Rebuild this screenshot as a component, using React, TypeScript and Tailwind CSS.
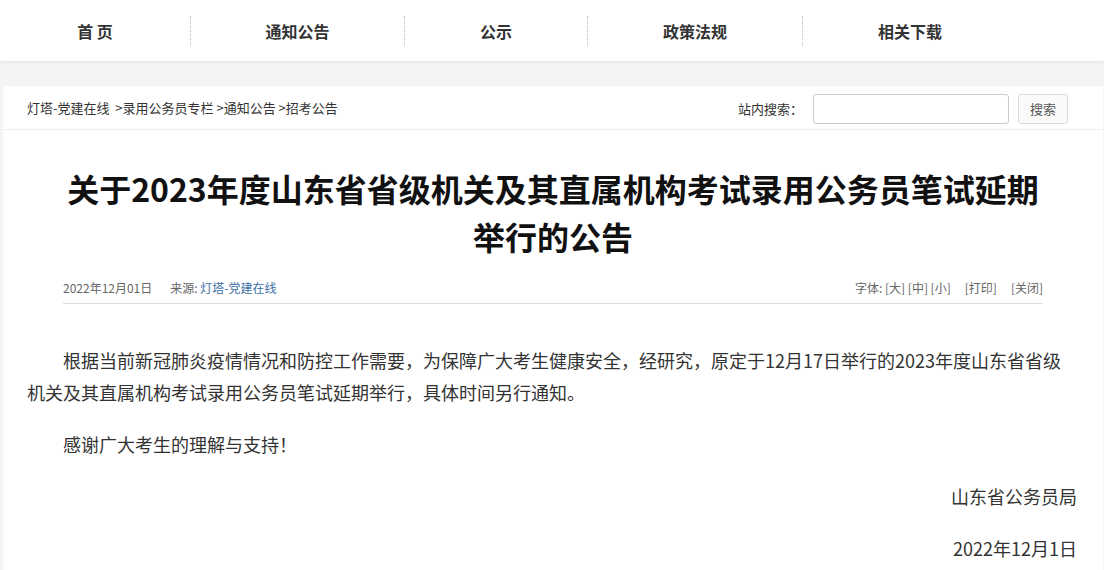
import React from 'react';

const navItems = [
    { label: '首 页', width: 'w-[190px]' },
    { label: '通知公告', width: 'w-[214px]' },
    { label: '公示', width: 'w-[183px]' },
    { label: '政策法规', width: 'w-[215px]' },
    { label: '相关下载', width: 'w-[215px]' },
];

const font = { fontFamily: '"Microsoft YaHei", "Noto Sans CJK SC", "Noto Sans", sans-serif' };

const App: React.FC = () => {
    return (
        <div className="min-h-[570px] bg-[#f4f4f4] text-[#333]" style={font}>
            {/* top nav */}
            <div className="h-[61px] bg-white shadow-[0_1px_3px_rgba(0,0,0,0.08)] flex items-center">
                {navItems.map((item, i) => (
                    <div
                        key={item.label}
                        className={`${item.width} h-[30px] flex items-center justify-center text-[16px] font-bold text-[#333] ${i > 0 ? 'border-l border-dotted border-[#bbb]' : ''}`}
                    >
                        {item.label}
                    </div>
                ))}
            </div>

            <div className="pt-[25px] pl-[3px]">
                <div className="w-[1100px] bg-white">
                    {/* breadcrumb + search */}
                    <div className="h-[44px] flex items-center justify-between pl-[24px] pr-[35px] border-b border-[#eee]">
                        <div className="text-[13px] text-[#333]">
                            灯塔-党建在线&nbsp;&nbsp;&gt;录用公务员专栏 &gt;通知公告 &gt;招考公告
                        </div>
                        <div className="flex items-center pt-[2px]">
                            <span className="text-[13px] text-[#333] mr-[10px]">站内搜索：</span>
                            <input className="w-[196px] h-[30px] border border-[#ccc] rounded-[3px] outline-none" />
                            <button className="ml-[9px] w-[50px] h-[30px] border border-[#ddd] rounded-[3px] bg-[#fafafa] text-[13px] text-[#555]">
                                搜索
                            </button>
                        </div>
                    </div>

                    {/* title */}
                    <div className="px-[60px] pt-[34px]">
                        <h1 className="text-center text-[32px] leading-[48px] font-bold text-[#111]">
                            关于2023年度山东省省级机关及其直属机构考试录用公务员笔试延期举行的公告
                        </h1>
                        <div className="mt-[12px] h-[32px] flex items-center justify-between border-b border-[#ddd] text-[12px] text-[#666]">
                            <div>
                                2022年12月01日<span className="ml-[18px]">来源: </span>
                                <span className="text-[#3b6ea5]">灯塔-党建在线</span>
                            </div>
                            <div>
                                字体: [大] [中] [小]<span className="ml-[14px]">[打印]</span>
                                <span className="ml-[14px]">[关闭]</span>
                            </div>
                        </div>
                    </div>

                    {/* body */}
                    <div className="pl-[24px] pr-[26px] pt-[40px] pb-[8px] text-[18px] leading-[32px] text-[#333]">
                        <p className="indent-[2em]">
                            根据当前新冠肺炎疫情情况和防控工作需要，为保障广大考生健康安全，经研究，原定于12月17日举行的2023年度山东省省级机关及其直属机构考试录用公务员笔试延期举行，具体时间另行通知。
                        </p>
                        <p className="indent-[2em] mt-[20px]">感谢广大考生的理解与支持！</p>
                        <p className="text-right mt-[20px]">山东省公务员局</p>
                        <p className="text-right mt-[20px]">2022年12月1日</p>
                    </div>
                </div>
            </div>
        </div>
    );
};

export default App;
